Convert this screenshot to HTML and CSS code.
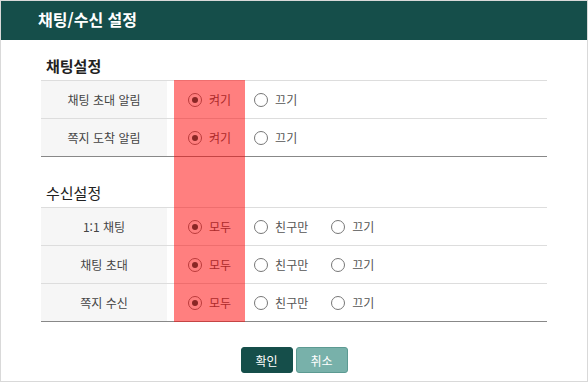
FILE: index.html
```html
<!DOCTYPE html>
<html lang="ko">
<head>
  <meta charset="UTF-8">
  <title>채팅/수신 설정</title>
  <link rel="stylesheet" href="styles.css">
</head>
<body>

  <div class="dialog">
    <header class="dialog-head">
      <h1>채팅/수신 설정</h1>
    </header>

    <div class="dialog-body">
      <div class="highlight"></div>

      <h2 class="section-title bold">채팅설정</h2>
      <div class="setting-table">
        <div class="row">
          <div class="label">채팅 초대 알림</div>
          <div class="options">
            <label class="opt"><input type="radio" name="invite" checked> 켜기</label>
            <label class="opt"><input type="radio" name="invite"> 끄기</label>
          </div>
        </div>
        <div class="row">
          <div class="label">쪽지 도착 알림</div>
          <div class="options">
            <label class="opt"><input type="radio" name="note" checked> 켜기</label>
            <label class="opt"><input type="radio" name="note"> 끄기</label>
          </div>
        </div>
      </div>

      <h2 class="section-title second">수신설정</h2>
      <div class="setting-table">
        <div class="row">
          <div class="label">1:1 채팅</div>
          <div class="options">
            <label class="opt"><input type="radio" name="chat" checked> 모두</label>
            <label class="opt"><input type="radio" name="chat"> 친구만</label>
            <label class="opt"><input type="radio" name="chat"> 끄기</label>
          </div>
        </div>
        <div class="row">
          <div class="label">채팅 초대</div>
          <div class="options">
            <label class="opt"><input type="radio" name="inv2" checked> 모두</label>
            <label class="opt"><input type="radio" name="inv2"> 친구만</label>
            <label class="opt"><input type="radio" name="inv2"> 끄기</label>
          </div>
        </div>
        <div class="row">
          <div class="label">쪽지 수신</div>
          <div class="options">
            <label class="opt"><input type="radio" name="msg" checked> 모두</label>
            <label class="opt"><input type="radio" name="msg"> 친구만</label>
            <label class="opt"><input type="radio" name="msg"> 끄기</label>
          </div>
        </div>
      </div>

      <div class="buttons">
        <button class="btn ok">확인</button>
        <button class="btn cancel">취소</button>
      </div>
    </div>
  </div>

</body>
</html>
```

FILE: styles.css
```css
body {
  margin: 0;
  font-family: "Noto Sans CJK KR", "Noto Sans", sans-serif;
  color: #333;
}

.dialog {
  width: 586px;
  height: 380px;
  border: 1px solid #d9d9d9;
  background-color: white;
}

.dialog-head {
  height: 39px;
  background-color: #154e4a;
  padding-left: 37px;
}

.dialog-head h1 {
  margin: 0;
  font-size: 16px;
  line-height: 37px;
  font-weight: bold;
  color: white;
}

.dialog-body {
  position: relative;
  padding: 12px 40px 0 40px;
}

.highlight {
  position: absolute;
  left: 173px;
  top: 40px;
  width: 71px;
  height: 242px;
  background-color: rgba(255, 0, 0, 0.5);
  pointer-events: none;
  z-index: 2;
}

.section-title {
  margin: 0 0 0 5px;
  font-size: 15px;
  line-height: 28px;
  font-weight: normal;
  color: #222;
}

.section-title.bold {
  font-weight: bold;
}

.section-title.second {
  margin-top: 22px;
}

.setting-table {
  border-top: 1px solid #ddd;
  border-bottom: 1px solid #888;
}

.row {
  display: flex;
  height: 37px;
}

.row + .row {
  border-top: 1px solid #ddd;
}

.label {
  width: 126px;
  background-color: #f6f6f6;
  display: flex;
  align-items: center;
  justify-content: center;
  font-size: 12px;
  color: #444;
}

.options {
  display: flex;
  align-items: center;
  padding-left: 21px;
  gap: 23px;
}

.opt {
  display: flex;
  align-items: center;
  gap: 7px;
  font-size: 12px;
  color: #555;
}

.opt input {
  appearance: none;
  -webkit-appearance: none;
  margin: 0;
  width: 14px;
  height: 14px;
  border: 1px solid #777;
  border-radius: 50%;
  background-color: white;
  display: flex;
  align-items: center;
  justify-content: center;
}

.opt input:checked::after {
  content: "";
  width: 6px;
  height: 6px;
  border-radius: 50%;
  background-color: #154e4a;
}

.buttons {
  display: flex;
  justify-content: center;
  gap: 3px;
  margin-top: 25px;
}

.btn {
  width: 52px;
  height: 26px;
  border-radius: 3px;
  font-family: inherit;
  font-size: 12px;
  color: white;
  cursor: pointer;
  padding: 0;
}

.ok {
  background-color: #154e4a;
  border: 1px solid #154e4a;
}

.cancel {
  background-color: #78b1aa;
  border: 1px solid #5c9a92;
}
```
